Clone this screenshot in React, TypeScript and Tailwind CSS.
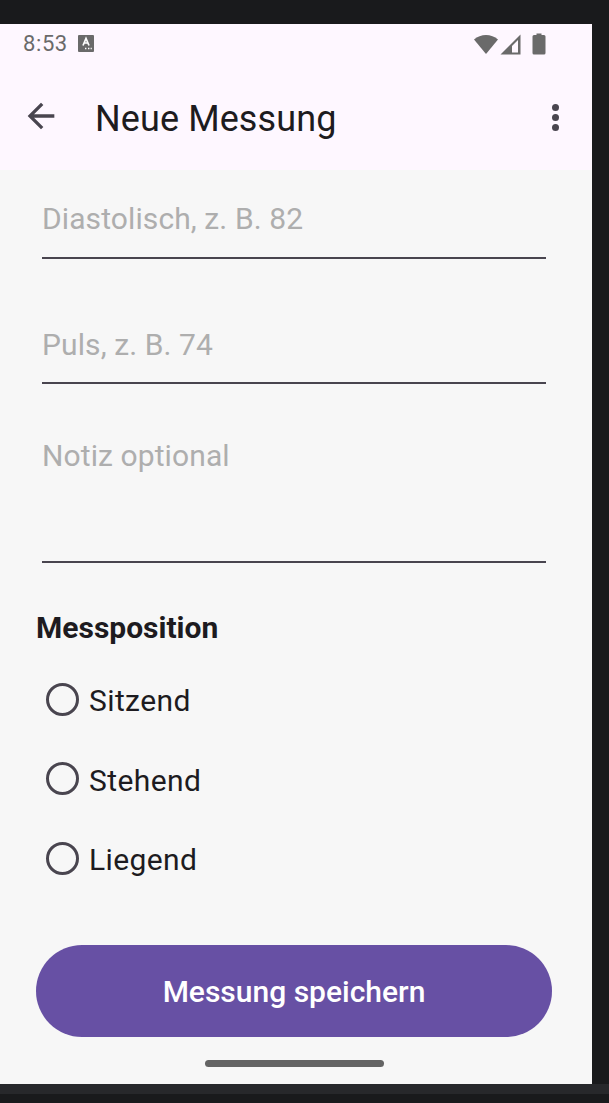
function Field({ label, height, mb, pt }: { label: string; height: string; mb: string; pt: string }) {
  return (
    <div className={`${height} ${mb} ml-[42px] mr-[46px] border-b-2 border-[#49454f]`}>
      <div className={`${pt} text-[30px] leading-[38px] tracking-[0.1px] text-[#aeaeae]`}>{label}</div>
    </div>
  );
}

function Radio({ label }: { label: string }) {
  return (
    <div className="h-[32px] mb-[47.5px] ml-[46px] flex items-center gap-[10px]">
      <div className="w-[33px] h-[33px] rounded-full border-[3px] border-[#49454f]" />
      <span className="pt-[4px] text-[30px] leading-[32px] tracking-[0.4px] text-[#1d1b20]">{label}</span>
    </div>
  );
}

function StatusBar() {
  return (
    <div className="h-[40px] flex items-center pl-[23px] pr-[46px] text-[#6a6a6a]">
      <span className="text-[22px] leading-none tracking-[0.6px] mr-[10px] -mt-[1px]">8:53</span>
      <svg width="16" height="17" viewBox="0 0 16 17" className="-mt-[1px]">
        <rect width="16" height="17" rx="1" fill="#6a6a6a" />
        <path d="M5 10.5 L8 3.5 L11 10.5 M6.2 8 H9.8" stroke="#fff" strokeWidth="1.7" fill="none" />
        <path d="M7 13.5h1.4M10 13.5h1.4M12.6 13.5h1.2" stroke="#fff" strokeWidth="1.3" />
      </svg>
      <div className="ml-auto flex items-center">
        <svg width="26" height="22" viewBox="0 0 26 22">
          <path d="M1 6.5 C7.5 0.5 18.5 0.5 25 6.5 L13 21 Z" fill="#6a6a6a" />
        </svg>
        <svg width="21" height="21" viewBox="0 0 21 21" className="ml-[1px]">
          <path d="M0.5 20.5 L20.5 0.5 V20.5 Z" fill="#6a6a6a" />
          <path d="M12 18.5 L18 18.5 V6 L12 12 Z" fill="#fef7ff" />
        </svg>
        <svg width="14" height="22" viewBox="0 0 14 22" className="ml-[11px]">
          <path d="M4.5 0.5 H9.5 V2 H12 A1.5 1.5 0 0 1 13.5 3.5 V20 A1.5 1.5 0 0 1 12 21.5 H2 A1.5 1.5 0 0 1 0.5 20 V3.5 A1.5 1.5 0 0 1 2 2 H4.5 Z" fill="#6a6a6a" />
        </svg>
      </div>
    </div>
  );
}

export default function App() {
  return (
    <div className="h-[1103px] bg-[#191a1c] pt-[24px] font-['Roboto',sans-serif] overflow-hidden">
      <div className="w-[592px] h-[1060px] bg-[#f7f7f7] flex flex-col">
        <div className="h-[146px] bg-[#fef7ff]">
          <StatusBar />
          <div className="h-[106px] flex items-center pl-[21px] pr-[33px]">
            <svg width="40" height="40" viewBox="0 0 24 24" fill="#49454f" className="-mt-[2px]">
              <path d="M20 11H7.83l5.59-5.59L12 4l-8 8 8 8 1.41-1.41L7.83 13H20v-2z" />
            </svg>
            <span className="ml-[34px] pt-[3px] text-[36px] tracking-[0.1px] text-[#1d1b20]">Neue Messung</span>
            <div className="ml-auto flex flex-col gap-[3px]">
              <div className="w-[7px] h-[7px] rounded-full bg-[#49454f]" />
              <div className="w-[7px] h-[7px] rounded-full bg-[#49454f]" />
              <div className="w-[7px] h-[7px] rounded-full bg-[#49454f]" />
            </div>
          </div>
        </div>
        <div className="pt-[29px] flex-1 flex flex-col">
          <Field label="Diastolisch, z. B. 82" height="h-[60px]" mb="mb-[65px]" pt="pt-[1px]" />
          <Field label="Puls, z. B. 74" height="h-[60px]" mb="mb-[53px]" pt="pt-[2px]" />
          <Field label="Notiz optional" height="h-[126px]" mb="mb-[47px]" pt="pt-[0px]" />
          <div className="ml-[36px] text-[30px] leading-[36px] font-bold text-[#1d1b20] mb-[37px]">Messposition</div>
          <Radio label="Sitzend" />
          <Radio label="Stehend" />
          <Radio label="Liegend" />
          <div className="mx-[36px] mt-[23px] pt-[2px] w-[516px] h-[92px] rounded-[46px] bg-[#6750a4] flex items-center justify-center text-white text-[30px] font-medium">
            Messung speichern
          </div>
          <div className="mt-[23px] ml-[205px] w-[179px] h-[7px] rounded-full bg-[#646464]" />
        </div>
      </div>
      <div className="h-[10px] bg-[#27282b]" />
    </div>
  );
}
